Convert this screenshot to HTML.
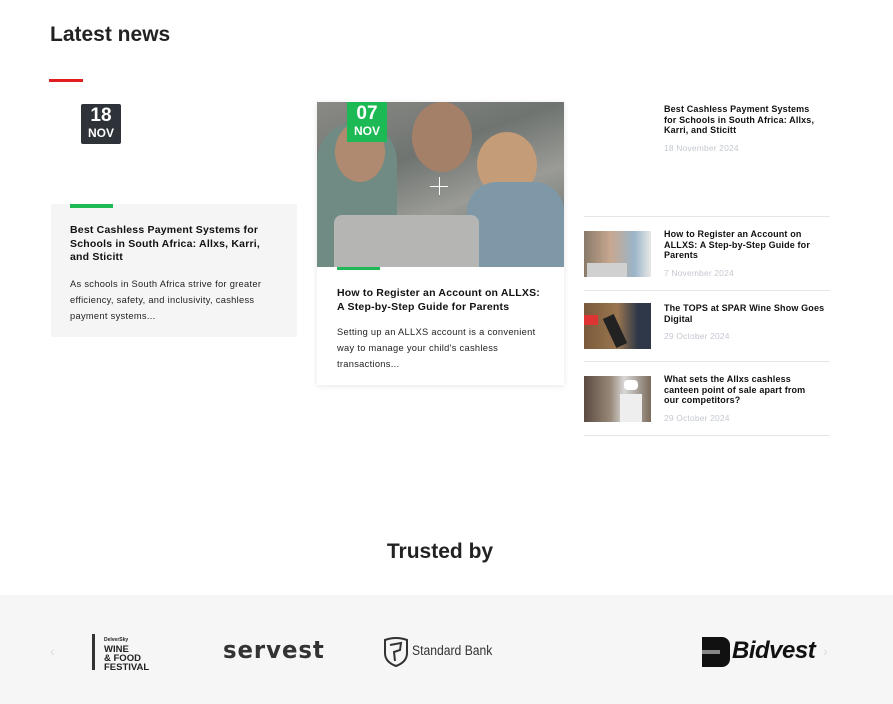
<!DOCTYPE html>
<html><head><meta charset="utf-8"><style>
*{margin:0;padding:0;box-sizing:border-box}
body{width:893px;height:704px;background:#fff;font-family:"Liberation Sans",sans-serif;color:#111;position:relative;overflow:hidden}
.a{position:absolute}
h2{position:absolute;font-size:21px;font-weight:600;color:#222}
.date{position:absolute;width:40px;height:40px;color:#fff;text-align:center;font-weight:bold}
.date b{display:block;font-size:19px;line-height:20px;padding-top:2px}
.date i{display:block;font-style:normal;font-size:12px;line-height:14px}
.t{font-size:10.5px;font-weight:bold;line-height:13.5px;color:#111;letter-spacing:.2px}
.e{font-size:9.3px;line-height:16px;color:#222;letter-spacing:.3px}
.rt{position:absolute;left:664px;width:158px;font-size:9px;font-weight:bold;line-height:10.5px;color:#111;letter-spacing:.15px}
.rd{display:block;font-weight:normal;color:#c4c8d0;font-size:8.5px;margin-top:7px}
.hr{position:absolute;left:584px;width:246px;height:1px;background:#e6e6e6}
.th{position:absolute;left:584px;width:67px;height:46px}
</style></head><body>
<h2 style="left:50px;top:23px">Latest news</h2>
<div class="a" style="left:49px;top:79px;width:34px;height:3px;background:#e01e1e"></div>

<div class="date" style="left:81px;top:104px;background:#2d3338;border-radius:2px"><b>18</b><i>NOV</i></div>
<div class="a" style="left:51px;top:204px;width:246px;height:133px;background:#f5f5f5"></div>
<div class="a" style="left:70px;top:204px;width:43px;height:4px;background:#1db954"></div>
<div class="a t" style="left:70px;top:224px;width:200px">Best Cashless Payment Systems for Schools in South Africa: Allxs, Karri, and Sticitt</div>
<div class="a e" style="left:70px;top:276px;width:210px">As schools in South Africa strive for greater efficiency, safety, and inclusivity, cashless payment systems...</div>

<div class="a" style="left:317px;top:102px;width:247px;height:283px;background:#fff;box-shadow:0 1px 6px rgba(0,0,0,.1)"></div>
<div class="a" style="left:317px;top:102px;width:247px;height:165px;background:linear-gradient(160deg,#8a8a86 0%,#6f7470 35%,#9a9b96 60%,#5e6664 100%);overflow:hidden">
<div class="a" style="left:0;top:20px;width:80px;height:145px;background:#6f8b83;border-radius:40px 40px 0 0"></div>
<div class="a" style="left:18px;top:20px;width:50px;height:60px;background:#b08a70;border-radius:50%"></div>
<div class="a" style="left:95px;top:0;width:60px;height:70px;background:#a58068;border-radius:50%"></div>
<div class="a" style="left:160px;top:30px;width:60px;height:65px;background:#c49c78;border-radius:50%"></div>
<div class="a" style="left:150px;top:80px;width:97px;height:85px;background:#7f98a8;border-radius:30px 30px 0 0"></div>
<div class="a" style="left:17px;top:113px;width:145px;height:52px;background:#b5b5b3;border-radius:8px 8px 0 0"></div>
<div class="a" style="left:113px;top:84px;width:18px;height:1px;background:#fff"></div>
<div class="a" style="left:122px;top:75px;width:1px;height:18px;background:#fff"></div>
</div>
<div class="date" style="left:347px;top:102px;background:#1db954"><b>07</b><i>NOV</i></div>
<div class="a" style="left:337px;top:267px;width:43px;height:3px;background:#1db954"></div>
<div class="a t" style="left:337px;top:287px;width:210px">How to Register an Account on ALLXS: A Step-by-Step Guide for Parents</div>
<div class="a e" style="left:337px;top:324px;width:208px">Setting up an ALLXS account is a convenient way to manage your child's cashless transactions...</div>

<div class="rt" style="top:104px">Best Cashless Payment Systems for Schools in South Africa: Allxs, Karri, and Sticitt<span class="rd">18 November 2024</span></div>
<div class="hr" style="top:216px"></div>
<div class="th" style="top:231px;background:linear-gradient(90deg,#8a7a6a,#c8a890 40%,#9ab4c8 75%,#e8e8e8)"><div class="a" style="left:3px;top:32px;width:40px;height:14px;background:#d0d0d0"></div></div>
<div class="rt" style="top:229px">How to Register an Account on ALLXS: A Step-by-Step Guide for Parents<span class="rd">7 November 2024</span></div>
<div class="hr" style="top:290px"></div>
<div class="th" style="top:303px;background:linear-gradient(90deg,#7a5a3a,#9a7650 50%,#2f3848 80%)"><div class="a" style="left:0;top:12px;width:14px;height:10px;background:#d33"></div><div class="a" style="left:25px;top:12px;width:12px;height:32px;background:#222;transform:rotate(-25deg)"></div></div>
<div class="rt" style="top:303px;width:168px">The TOPS at SPAR Wine Show Goes Digital<span class="rd">29 October 2024</span></div>
<div class="hr" style="top:361px"></div>
<div class="th" style="top:376px;background:linear-gradient(90deg,#5a4a40,#9a8a7a 40%,#d8d8d8 60%,#7a6a5a)"><div class="a" style="left:40px;top:4px;width:14px;height:10px;background:#fff;border-radius:4px"></div><div class="a" style="left:36px;top:18px;width:22px;height:28px;background:#eee"></div></div>
<div class="rt" style="top:374px">What sets the Allxs cashless canteen point of sale apart from our competitors?<span class="rd">29 October 2024</span></div>
<div class="hr" style="top:435px"></div>

<h2 style="left:0;width:880px;text-align:center;top:540px">Trusted by</h2>
<div class="a" style="left:0;top:595px;width:893px;height:109px;background:#f6f6f6"></div>
<div class="a" style="left:50px;top:643px;color:#ddd;font-size:14px">‹</div>
<div class="a" style="left:823px;top:643px;color:#ddd;font-size:14px">›</div>
<div class="a" style="left:92px;top:634px;width:62px;height:36px;font-weight:bold;color:#222;font-size:9.5px;line-height:9px;padding-left:9px;border-left:3px solid #333"><span style="font-size:5px">DelverSky</span><br>WINE<br>&amp; FOOD<br>FESTIVAL</div>
<div class="a" style="left:223px;top:636px;font-size:24px;letter-spacing:1px;color:#333;font-family:'DejaVu Sans',sans-serif;font-weight:bold;transform:scaleX(.95);transform-origin:left">servest</div>
<svg class="a" style="left:383px;top:637px" width="26" height="30" viewBox="0 0 26 30"><path d="M2 3 Q13 -1 24 3 L24 16 Q24 25 13 29 Q2 25 2 16Z" fill="none" stroke="#333" stroke-width="2"/><path d="M7 8 L18 6 L17 13 L11 15 L12 24" fill="none" stroke="#333" stroke-width="2"/></svg>
<div class="a" style="left:412px;top:643px;font-size:13.5px;color:#333;transform:scaleX(.9);transform-origin:left">Standard Bank</div>
<div class="a" style="left:702px;top:637px;width:28px;height:30px;background:#111;border-radius:0 8px 8px 0"></div>
<div class="a" style="left:702px;top:650px;width:18px;height:4px;background:#888"></div>
<div class="a" style="left:732px;top:637px;font-size:24px;font-weight:bold;font-style:italic;color:#111;letter-spacing:-.5px">Bidvest</div>
</body></html>
